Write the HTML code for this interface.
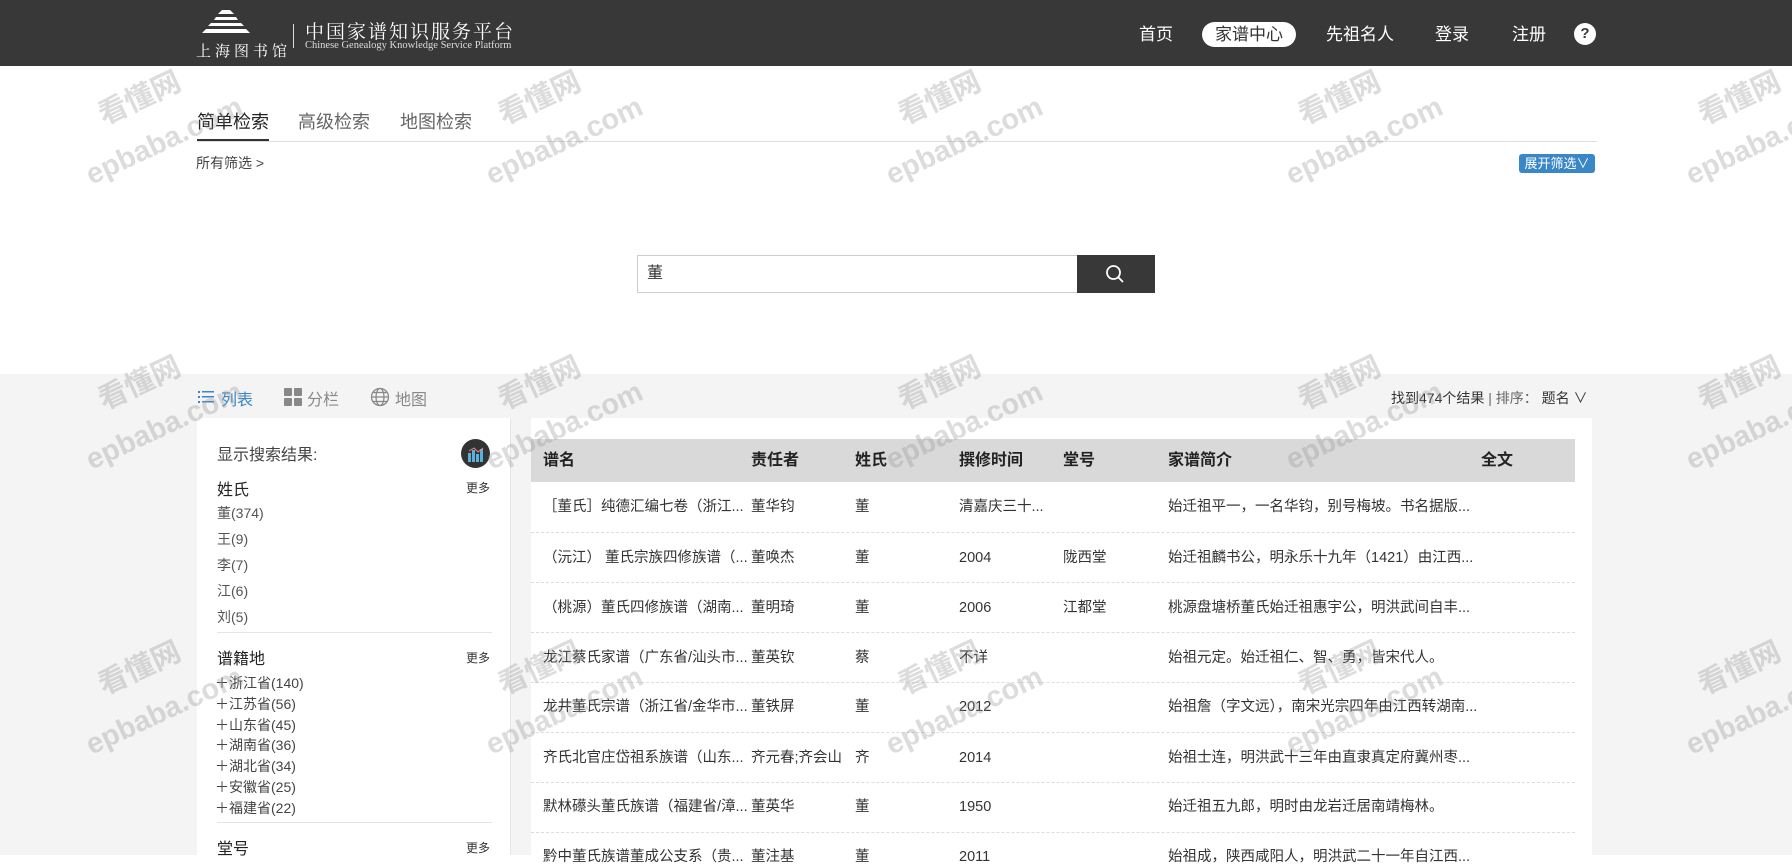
<!DOCTYPE html>
<html><head><meta charset="utf-8"><style>
*{margin:0;padding:0;box-sizing:border-box}
body{width:1792px;height:855px;overflow:hidden;background:#fff;font-family:"Liberation Sans","Noto Sans CJK SC",sans-serif;color:#333;position:relative}
.abs{position:absolute;white-space:nowrap}
.hdr{position:absolute;left:0;top:0;width:1792px;height:66px;background:#383838}
.nav{color:#fff;font-size:17px;top:22px;line-height:25px}
.pill{background:#fff;color:#333;border-radius:13px;width:94px;text-align:center}
.gray{position:absolute;left:0;top:374px;width:1792px;height:481px;background:#f4f4f4}
.panel{position:absolute;left:197px;top:418px;width:314px;height:437px;background:#fff;border-right:1px solid #e5e5e5}
.tbl{position:absolute;left:531px;top:418px;width:1061px;height:437px;background:#fff}
.th{position:absolute;left:531px;top:439px;width:1044px;height:43px;background:#d9d9d9}
.hc{font-size:16px;font-weight:bold;color:#222;top:451px;line-height:20px}
.td{font-size:14.5px;color:#333;line-height:20px}
.sep{position:absolute;left:531px;width:1044px;border-top:1px dashed #ddd}
.lp{font-size:14px;color:#555;line-height:20px}
.wm{position:absolute;color:rgba(150,150,150,0.33);font-weight:bold;transform:rotate(-25deg);white-space:nowrap;font-size:29px}
</style></head><body>
<div class="hdr"></div>
<svg class="abs" style="left:196px;top:8px" width="60" height="32" viewBox="0 0 60 32"><g fill="#fff"><path d="M26 2h8l4 4h-16z"/><path d="M20 9h20l2 3h-24z"/><path d="M15 15h30l3 3h-36z"/><path d="M10 21h40l4 4h-48z"/></g></svg>
<div class="abs" style="left:196px;top:40px;color:#fff;font-size:15px;letter-spacing:4px;font-family:'Noto Serif CJK SC',serif">上海图书馆</div>
<div class="abs" style="left:293px;top:24px;width:1px;height:24px;background:#ddd"></div>
<div class="abs" style="left:305px;top:17px;color:#fff;font-size:19px;letter-spacing:2px;font-family:'Noto Serif CJK SC',serif">中国家谱知识服务平台</div>
<div class="abs" style="left:305px;top:40px;color:#ddd;font-size:10.5px;font-family:'Liberation Serif',serif">Chinese Genealogy Knowledge Service Platform</div>
<div class="abs nav" style="left:1139px">首页</div>
<div class="abs nav pill" style="left:1202px">家谱中心</div>
<div class="abs nav" style="left:1326px">先祖名人</div>
<div class="abs nav" style="left:1435px">登录</div>
<div class="abs nav" style="left:1512px">注册</div>
<div class="abs" style="left:1574px;top:23px;width:22px;height:22px;border-radius:50%;background:#fff;color:#383838;font-weight:bold;font-size:15px;text-align:center;line-height:22px">?</div>

<div class="abs" style="left:197px;top:108px;font-size:18px;color:#222">简单检索</div>
<div class="abs" style="left:298px;top:108px;font-size:18px;color:#666">高级检索</div>
<div class="abs" style="left:400px;top:108px;font-size:18px;color:#666">地图检索</div>
<div class="abs" style="left:197px;top:141px;width:1400px;height:1px;background:#ddd"></div>
<div class="abs" style="left:197px;top:139px;width:72px;height:2px;background:#333"></div>
<div class="abs" style="left:196px;top:153px;font-size:14px;color:#444">所有筛选 &gt;</div>
<div class="abs" style="left:1519px;top:154px;width:76px;height:19px;background:#3a87c8;color:#fff;font-size:13px;border-radius:3px;text-align:center;line-height:19px">展开筛选∨</div>

<div class="abs" style="left:637px;top:255px;width:441px;height:38px;border:1px solid #ccc;font-size:16px;line-height:36px;padding-left:9px">董</div>
<div class="abs" style="left:1077px;top:255px;width:78px;height:38px;background:#383838"></div>
<svg class="abs" style="left:1105px;top:264px" width="20" height="20" viewBox="0 0 20 20"><circle cx="8.5" cy="8.5" r="6.5" stroke="#fff" stroke-width="1.8" fill="none"/><path d="M13.5 13.5l4.5 4.5" stroke="#fff" stroke-width="1.8"/></svg>

<div class="gray"></div>
<svg class="abs" style="left:198px;top:390px" width="16" height="14"><g fill="#3a87c8"><rect x="0" y="1" width="2" height="2"/><rect x="0" y="6" width="2" height="2"/><rect x="0" y="11" width="2" height="2"/><rect x="4" y="1" width="12" height="1.5"/><rect x="4" y="6" width="12" height="1.5"/><rect x="4" y="11" width="12" height="1.5"/></g></svg>
<div class="abs" style="left:221px;top:386px;font-size:16px;color:#3a87c8">列表</div>
<svg class="abs" style="left:284px;top:388px" width="18" height="18"><g fill="#888"><rect x="0" y="0" width="8" height="8" rx="1"/><rect x="10" y="0" width="8" height="8" rx="1"/><rect x="0" y="10" width="8" height="8" rx="1"/><rect x="10" y="10" width="8" height="8" rx="1"/></g></svg>
<div class="abs" style="left:307px;top:386px;font-size:16px;color:#888">分栏</div>
<svg class="abs" style="left:370px;top:387px" width="20" height="20" viewBox="0 0 20 20"><g stroke="#888" fill="none" stroke-width="1.3"><circle cx="10" cy="10" r="8.5"/><ellipse cx="10" cy="10" rx="4" ry="8.5"/><path d="M1.5 10h17M3 5.5h14M3 14.5h14"/></g></svg>
<div class="abs" style="left:395px;top:386px;font-size:16px;color:#888">地图</div>
<div class="abs" style="left:1391px;top:388px;font-size:14px;color:#333">找到474个结果 <span style="color:#666">| 排序：</span>&nbsp;题名 ∨</div>

<div class="panel"></div>
<div class="abs" style="left:217px;top:441px;font-size:16px;color:#444">显示搜索结果:</div>
<div class="abs" style="left:461px;top:439px;width:29px;height:29px;border-radius:50%;background:#333"></div>
<svg class="abs" style="left:467px;top:445px" width="18" height="18"><g fill="#5ab0d8"><rect x="1" y="8" width="3" height="9"/><rect x="5" y="5" width="3" height="12"/><rect x="9" y="9" width="3" height="8"/><rect x="13" y="4" width="3" height="13"/></g><path d="M2 6l5-3 4 4 5-4" stroke="#e88" fill="none"/></svg>
<div class="abs" style="left:217px;top:476px;font-size:16px;color:#222">姓氏</div>
<div class="abs lp" style="left:466px;top:478px;font-size:12px;color:#333">更多</div>
<div class="abs lp" style="left:217px;top:503px">董(374)</div>
<div class="abs lp" style="left:217px;top:529px">王(9)</div>
<div class="abs lp" style="left:217px;top:555px">李(7)</div>
<div class="abs lp" style="left:217px;top:581px">江(6)</div>
<div class="abs lp" style="left:217px;top:607px">刘(5)</div>
<div class="abs" style="left:217px;top:632px;width:275px;height:1px;background:#e5e5e5"></div>
<div class="abs" style="left:217px;top:645px;font-size:16px;color:#222">谱籍地</div>
<div class="abs lp" style="left:466px;top:648px;font-size:12px;color:#333">更多</div>
<div class="abs lp" style="left:215px;top:673px;line-height:20.8px;color:#444">＋浙江省(140)<br>＋江苏省(56)<br>＋山东省(45)<br>＋湖南省(36)<br>＋湖北省(34)<br>＋安徽省(25)<br>＋福建省(22)</div>
<div class="abs" style="left:217px;top:822px;width:275px;height:1px;background:#e5e5e5"></div>
<div class="abs" style="left:217px;top:835px;font-size:16px;color:#222">堂号</div>
<div class="abs lp" style="left:466px;top:838px;font-size:12px;color:#333">更多</div>

<div class="tbl"></div>
<div class="th"></div>
<div class="abs hc" style="left:543px">谱名</div>
<div class="abs hc" style="left:751px">责任者</div>
<div class="abs hc" style="left:855px">姓氏</div>
<div class="abs hc" style="left:959px">撰修时间</div>
<div class="abs hc" style="left:1063px">堂号</div>
<div class="abs hc" style="left:1168px">家谱简介</div>
<div class="abs hc" style="left:1481px">全文</div>

<div class="abs td" style="left:543px;top:497px">［董氏］纯德汇编七卷（浙江...</div><div class="abs td" style="left:751px;top:497px">董华钧</div><div class="abs td" style="left:855px;top:497px">董</div><div class="abs td" style="left:959px;top:497px">清嘉庆三十...</div><div class="abs td" style="left:1168px;top:497px">始迁祖平一，一名华钧，别号梅坡。书名据版...</div>
<div class="sep" style="top:532px"></div>
<div class="abs td" style="left:543px;top:548px">（沅江） 董氏宗族四修族谱（...</div><div class="abs td" style="left:751px;top:548px">董唤杰</div><div class="abs td" style="left:855px;top:548px">董</div><div class="abs td" style="left:959px;top:548px">2004</div><div class="abs td" style="left:1063px;top:548px">陇西堂</div><div class="abs td" style="left:1168px;top:548px">始迁祖麟书公，明永乐十九年（1421）由江西...</div>
<div class="sep" style="top:582px"></div>
<div class="abs td" style="left:543px;top:598px">（桃源）董氏四修族谱（湖南...</div><div class="abs td" style="left:751px;top:598px">董明琦</div><div class="abs td" style="left:855px;top:598px">董</div><div class="abs td" style="left:959px;top:598px">2006</div><div class="abs td" style="left:1063px;top:598px">江都堂</div><div class="abs td" style="left:1168px;top:598px">桃源盘塘桥董氏始迁祖惠宇公，明洪武间自丰...</div>
<div class="sep" style="top:632px"></div>
<div class="abs td" style="left:543px;top:648px">龙江蔡氏家谱（广东省/汕头市...</div><div class="abs td" style="left:751px;top:648px">董英钦</div><div class="abs td" style="left:855px;top:648px">蔡</div><div class="abs td" style="left:959px;top:648px">不详</div><div class="abs td" style="left:1168px;top:648px">始祖元定。始迁祖仁、智、勇，皆宋代人。</div>
<div class="sep" style="top:682px"></div>
<div class="abs td" style="left:543px;top:697px">龙井董氏宗谱（浙江省/金华市...</div><div class="abs td" style="left:751px;top:697px">董铁屏</div><div class="abs td" style="left:855px;top:697px">董</div><div class="abs td" style="left:959px;top:697px">2012</div><div class="abs td" style="left:1168px;top:697px">始祖詹（字文远），南宋光宗四年由江西转湖南...</div>
<div class="sep" style="top:732px"></div>
<div class="abs td" style="left:543px;top:748px">齐氏北官庄岱祖系族谱（山东...</div><div class="abs td" style="left:751px;top:748px">齐元春;齐会山</div><div class="abs td" style="left:855px;top:748px">齐</div><div class="abs td" style="left:959px;top:748px">2014</div><div class="abs td" style="left:1168px;top:748px">始祖士连，明洪武十三年由直隶真定府冀州枣...</div>
<div class="sep" style="top:782px"></div>
<div class="abs td" style="left:543px;top:797px">默林礤头董氏族谱（福建省/漳...</div><div class="abs td" style="left:751px;top:797px">董英华</div><div class="abs td" style="left:855px;top:797px">董</div><div class="abs td" style="left:959px;top:797px">1950</div><div class="abs td" style="left:1168px;top:797px">始迁祖五九郎，明时由龙岩迁居南靖梅林。</div>
<div class="sep" style="top:832px"></div>
<div class="abs td" style="left:543px;top:847px">黔中董氏族谱董成公支系（贵...</div><div class="abs td" style="left:751px;top:847px">董注基</div><div class="abs td" style="left:855px;top:847px">董</div><div class="abs td" style="left:959px;top:847px">2011</div><div class="abs td" style="left:1168px;top:847px">始祖成，陕西咸阳人，明洪武二十一年自江西...</div>

<div class="wm" style="left:95px;top:75px">看懂网</div><div class="wm" style="left:80px;top:125px">epbaba.com</div>
<div class="wm" style="left:495px;top:75px">看懂网</div><div class="wm" style="left:480px;top:125px">epbaba.com</div>
<div class="wm" style="left:895px;top:75px">看懂网</div><div class="wm" style="left:880px;top:125px">epbaba.com</div>
<div class="wm" style="left:1295px;top:75px">看懂网</div><div class="wm" style="left:1280px;top:125px">epbaba.com</div>
<div class="wm" style="left:1695px;top:75px">看懂网</div><div class="wm" style="left:1680px;top:125px">epbaba.com</div>
<div class="wm" style="left:95px;top:360px">看懂网</div><div class="wm" style="left:80px;top:410px">epbaba.com</div>
<div class="wm" style="left:495px;top:360px">看懂网</div><div class="wm" style="left:480px;top:410px">epbaba.com</div>
<div class="wm" style="left:895px;top:360px">看懂网</div><div class="wm" style="left:880px;top:410px">epbaba.com</div>
<div class="wm" style="left:1295px;top:360px">看懂网</div><div class="wm" style="left:1280px;top:410px">epbaba.com</div>
<div class="wm" style="left:1695px;top:360px">看懂网</div><div class="wm" style="left:1680px;top:410px">epbaba.com</div>
<div class="wm" style="left:95px;top:645px">看懂网</div><div class="wm" style="left:80px;top:695px">epbaba.com</div>
<div class="wm" style="left:495px;top:645px">看懂网</div><div class="wm" style="left:480px;top:695px">epbaba.com</div>
<div class="wm" style="left:895px;top:645px">看懂网</div><div class="wm" style="left:880px;top:695px">epbaba.com</div>
<div class="wm" style="left:1295px;top:645px">看懂网</div><div class="wm" style="left:1280px;top:695px">epbaba.com</div>
<div class="wm" style="left:1695px;top:645px">看懂网</div><div class="wm" style="left:1680px;top:695px">epbaba.com</div>
</body></html>
